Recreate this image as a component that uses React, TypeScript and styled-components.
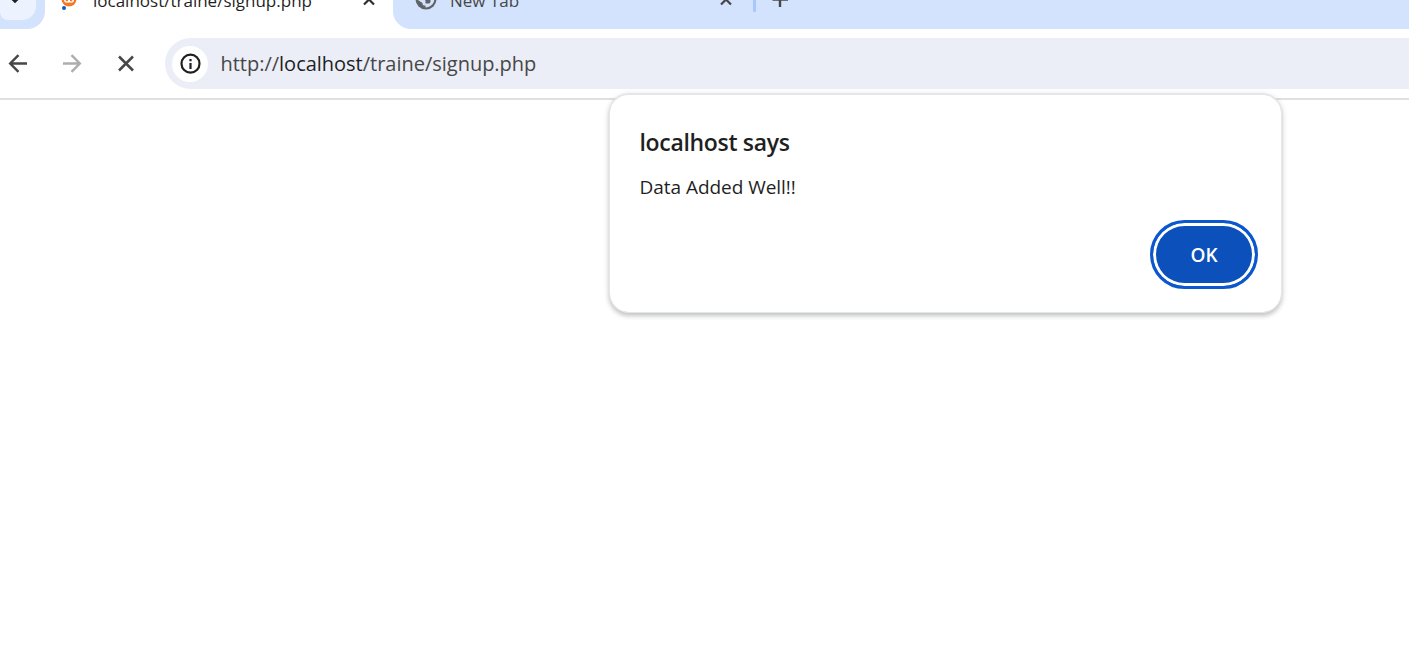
import React from 'react';
import styled, { createGlobalStyle } from 'styled-components';

const Global = createGlobalStyle`
  * { box-sizing: border-box; }
  html, body { margin: 0; height: 100%; overflow: hidden; background: #fff; }
  body { font-family: "Open Sans", "Noto Sans", sans-serif; color: #1f1f1f; }
`;

const Browser = styled.div`
  position: relative;
  display: flex;
  flex-direction: column;
  width: 1409px;
  height: 658px;
  overflow: hidden;
  background: #fff;
`;

const TabStrip = styled.div`
  display: flex;
  height: 29px;
  flex: none;
  overflow: hidden;
`;

const SearchCorner = styled.div`
  width: 45px;
  height: 29px;
  background: #d3e3fd;
  border-bottom-right-radius: 18px;
`;

const SearchButton = styled.div`
  display: flex;
  width: 36px;
  height: 20px;
  background: #ecf2fe;
  border-bottom-right-radius: 14px;
  border-bottom-left-radius: 8px;
`;

const Tab = styled.div`
  display: flex;
  width: 348px;
  padding-left: 16px;
`;

const TabTitle = styled.span<{ $color: string }>`
  width: 268px;
  margin-top: -12px;
  font-size: 17px;
  line-height: 25px;
  white-space: nowrap;
  color: ${p => p.$color};
`;

const InactiveTabs = styled.div`
  display: flex;
  flex: 1;
  padding-left: 22px;
  background: #d3e3fd;
  border-bottom-left-radius: 18px;
`;

const Divider = styled.div`
  width: 3px;
  height: 12px;
  margin-left: 19px;
  background: #a8c7fa;
  border-radius: 0 0 1px 1px;
`;

const Toolbar = styled.div`
  display: flex;
  align-items: center;
  height: 71px;
  flex: none;
  border-bottom: 2px solid #e0e0e0;
`;

const NavButtons = styled.div`
  display: flex;
  align-items: center;
  gap: 26px;
  width: 165px;
  padding-left: 4px;
`;

const Omnibox = styled.div`
  display: flex;
  align-items: center;
  flex: 1;
  height: 51px;
  padding-left: 7px;
  background: #ebeef7;
  border-radius: 26px 0 0 26px;
`;

const InfoChip = styled.div`
  display: flex;
  align-items: center;
  justify-content: center;
  width: 36px;
  height: 36px;
  margin-right: 12.5px;
  border-radius: 50%;
  background: #fff;
`;

const Url = styled.span`
  font-size: 20px;
  line-height: 28px;
  letter-spacing: -0.015px;
  white-space: nowrap;
  color: #474747;
`;

const Host = styled.span`
  color: #1f1f1f;
`;

const Dialog = styled.div`
  position: absolute;
  left: 609px;
  top: 93px;
  display: flex;
  flex-direction: column;
  width: 673px;
  height: 220px;
  padding: 32px 23px 23px 29.5px;
  background: #fff;
  background-clip: padding-box;
  border: 1px solid #e6e6e6;
  border-top-width: 2px;
  border-radius: 20px;
  box-shadow: 0 3px 4px rgba(60, 64, 67, 0.25), 0 1px 6px rgba(60, 64, 67, 0.1);
`;

const Heading = styled.h1`
  margin: 0;
  font-size: 23px;
  line-height: 30px;
  font-weight: 600;
  letter-spacing: -0.320px;
  white-space: nowrap;
`;

const Message = styled.p`
  margin: 17px 0 0;
  font-size: 19px;
  line-height: 26px;
  letter-spacing: -0.040px;
  white-space: nowrap;
`;

const OkButton = styled.button`
  align-self: flex-end;
  width: 108px;
  height: 69px;
  margin: auto 0 0;
  padding: 0;
  border: 3px solid #0b57d0;
  border-radius: 35px;
  background: #0b50bb;
  box-shadow: inset 0 0 0 3px #fff;
  color: #fff;
  font: 600 19px/26px "Open Sans", sans-serif;
`;

export default function App() {
  return (
    <Browser>
      <Global />
      <TabStrip>
        <SearchCorner>
          <SearchButton>
            <svg width="36" height="20"><path d="M10.500 -3L15 1.500L19.500 -3" fill="none" stroke="#1f1f1f" strokeWidth="2.600" /></svg>
          </SearchButton>
        </SearchCorner>
        <Tab>
          <svg width="32" height="14" viewBox="0 0 32 14">
            <circle cx="8" cy="-1" r="7.500" fill="#f37726" />
            <path d="M3.800 -1v1a2.100 2.100 0 0 0 4.200 0v-1v1a2.100 2.100 0 0 0 4.200 0v-1" fill="none" stroke="#fff" strokeWidth="1.400" />
            <circle cx="3" cy="8" r="2" fill="#0b57d0" />
          </svg>
          <TabTitle $color="#1f1f1f">localhost/traine/signup.php</TabTitle>
          <svg width="16" height="10"><path d="M2.500 -6L13 4.500M13.500 -6L3 4.500" stroke="#303030" strokeWidth="2.200" /></svg>
        </Tab>
        <InactiveTabs>
          <svg width="35" height="14" viewBox="0 0 35 14">
            <circle cx="11" cy="-1" r="10.500" fill="#5f6368" />
            <path d="M3 -1H8C9.500 -1 10.500 0 10.500 1.500V3.500H14C15 3.500 15.500 2.500 15.500 1V-1H19.300C19.300 3.500 16 7 10.500 7.500V5.500H9C8 5.500 7.500 4.500 7.500 3L3 0Z" fill="#d3e3fd" />
          </svg>
          <TabTitle $color="#474747">New Tab</TabTitle>
          <svg width="16" height="10"><path d="M2.500 -6L13 4.500M13.500 -6L3 4.500" stroke="#474747" strokeWidth="2.200" /></svg>
          <Divider />
          <svg width="40" height="10"><path d="M24 -8V7" stroke="#474747" strokeWidth="2.400" /><path d="M16.500 0H32" stroke="#474747" strokeWidth="1.500" /></svg>
        </InactiveTabs>
      </TabStrip>
      <Toolbar>
        <NavButtons>
          <svg width="28" height="28" viewBox="0 0 28 28" fill="none" stroke="#474747" strokeWidth="2.400"><path d="M23 13.500H6.500M14.500 5.200L6.200 13.500L14.500 21.800" /></svg>
          <svg width="28" height="28" viewBox="0 0 28 28" fill="none" stroke="#adadad" strokeWidth="2.400"><path d="M5 13.500H21.500M13.500 5.200L21.800 13.500L13.500 21.800" /></svg>
          <svg width="28" height="28" viewBox="0 0 28 28" fill="none" stroke="#474747" strokeWidth="2.500"><path d="M7 6.500L21 20.500M21 6.500L7 20.500" /></svg>
        </NavButtons>
        <Omnibox>
          <InfoChip>
            <svg width="24" height="24" viewBox="0 0 24 24"><circle cx="12.500" cy="11.700" r="9" fill="none" stroke="#1f1f1f" strokeWidth="2.200" /><path d="M12.500 11V17M12.500 7V9.200" stroke="#1f1f1f" strokeWidth="2.200" /></svg>
          </InfoChip>
          <Url>http://<Host>localhost</Host>/traine/signup.php</Url>
        </Omnibox>
      </Toolbar>
      <Dialog role="alertdialog">
        <Heading>localhost says</Heading>
        <Message>Data Added Well!!</Message>
        <OkButton>OK</OkButton>
      </Dialog>
    </Browser>
  );
}
